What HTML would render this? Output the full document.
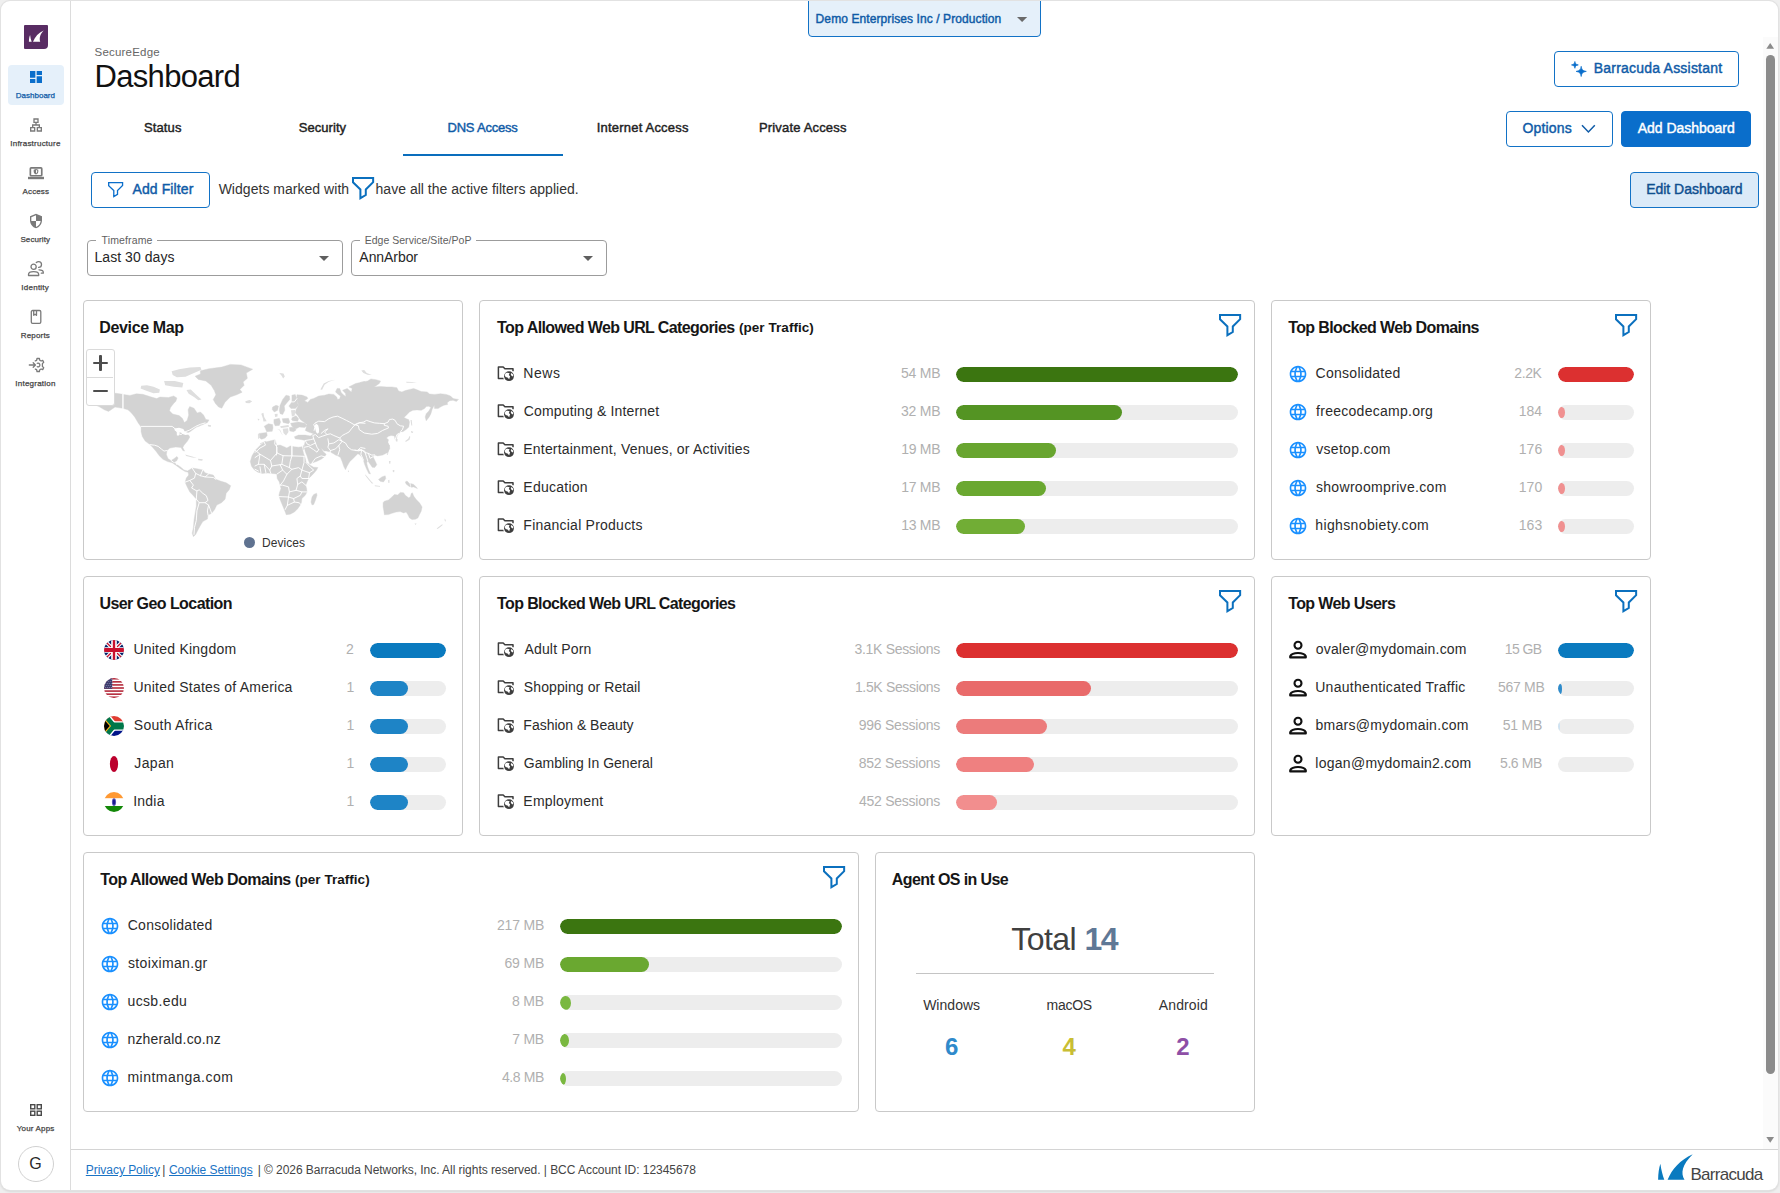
<!DOCTYPE html>
<html lang="en">
<head>
<meta charset="utf-8">
<title>SecureEdge - Dashboard</title>
<style>
html,body{margin:0;padding:0;}
body{width:1780px;height:1193px;overflow:hidden;background:#efefef;font-family:"Liberation Sans",sans-serif;}
#win{position:absolute;left:1px;top:1px;width:1777px;height:1189px;background:#fff;border-radius:9px;overflow:hidden;box-shadow:0 0 0 1px #e2e2e2,0 1px 3px rgba(0,0,0,.18);}
#pg{position:absolute;left:-1px;top:-1px;width:1780px;height:1193px;}
.a{position:absolute;box-sizing:border-box;}
.t{position:absolute;white-space:pre;line-height:1;font-family:"Liberation Sans",sans-serif;}
.card{position:absolute;box-sizing:border-box;border:1px solid #c9c9c9;border-radius:4px;background:#fff;}
.bar{position:absolute;height:15px;border-radius:8px;background:#ededed;overflow:hidden;}
.bar i{position:absolute;left:0;top:0;height:15px;border-radius:8px;display:block;}
.btn{position:absolute;box-sizing:border-box;border:1px solid #1272c6;border-radius:4px;background:#fff;}
svg{position:absolute;overflow:visible;}
</style>
</head>
<body>
<div id="win"><div id="pg">

<!-- shapes -->
<!-- sidebar -->
<div class="a" style="left:70px;top:0;width:1px;height:1193px;background:#dcdcdc"></div>
<div class="a" style="left:24px;top:25px;width:24px;height:24px;background:#582c63;border-radius:1px 1px 4px 1px"></div>
<div class="a" style="left:8px;top:65px;width:56px;height:40px;background:#e5f0fa;border-radius:4px"></div>
<div class="a" style="left:18px;top:1146px;width:36px;height:36px;border:1px solid #d0d0d0;border-radius:50%"></div>
<!-- account dropdown -->
<div class="a" style="left:808px;top:-4px;width:233px;height:41px;background:#e5f0fa;border:1px solid #1272c6;border-radius:4px"></div>
<!-- buttons -->
<div class="btn" style="left:1554px;top:51px;width:185px;height:36px"></div>
<div class="btn" style="left:1506px;top:111px;width:107px;height:36px"></div>
<div class="btn" style="left:1621px;top:111px;width:130px;height:36px;background:#0a6ecb;border-color:#0a6ecb"></div>
<div class="btn" style="left:1630px;top:172px;width:129px;height:36px;background:#dbeaf8"></div>
<div class="btn" style="left:91px;top:172px;width:119px;height:36px"></div>
<!-- tab underline -->
<div class="a" style="left:403px;top:154px;width:160px;height:2px;background:#0a6ebd"></div>
<!-- selects -->
<div class="a" style="left:87px;top:240px;width:256px;height:36px;border:1px solid #9c9c9c;border-radius:4px"></div>
<div class="a" style="left:96px;top:239px;width:61px;height:3px;background:#fff"></div>
<div class="a" style="left:351px;top:240px;width:256px;height:36px;border:1px solid #9c9c9c;border-radius:4px"></div>
<div class="a" style="left:360px;top:239px;width:116px;height:3px;background:#fff"></div>
<!-- footer -->
<div class="a" style="left:71px;top:1149px;width:1707px;height:1px;background:#d4d4d4"></div>
<!-- scrollbar -->
<div class="a" style="left:1763px;top:37px;width:15px;height:1112px;background:#fbfbfb"></div>
<div class="a" style="left:1766px;top:55px;width:9px;height:1019px;background:#8b8b8b;border-radius:5px"></div>
<!-- cards -->
<div class="card" style="left:83px;top:300px;width:380px;height:260px"></div>
<div class="card" style="left:479px;top:300px;width:776px;height:260px"></div>
<div class="card" style="left:1271px;top:300px;width:380px;height:260px"></div>
<div class="card" style="left:83px;top:576px;width:380px;height:260px"></div>
<div class="card" style="left:479px;top:576px;width:776px;height:260px"></div>
<div class="card" style="left:1271px;top:576px;width:380px;height:260px"></div>
<div class="card" style="left:83px;top:852px;width:776px;height:260px"></div>
<div class="card" style="left:875px;top:852px;width:380px;height:260px"></div>
<!-- agent OS divider -->
<div class="a" style="left:916px;top:973px;width:298px;height:1px;background:#c4c4c4"></div>
<!-- bars -->
<div class="bar" style="left:956px;top:367px;width:282px"><i style="width:282px;background:#3b7510"></i></div>
<div class="bar" style="left:956px;top:405px;width:282px"><i style="width:166px;background:#549423"></i></div>
<div class="bar" style="left:956px;top:443px;width:282px"><i style="width:99.5px;background:#68a52f"></i></div>
<div class="bar" style="left:956px;top:481px;width:282px"><i style="width:89.5px;background:#6aa830"></i></div>
<div class="bar" style="left:956px;top:519px;width:282px"><i style="width:68.5px;background:#71ad35"></i></div>
<div class="bar" style="left:1558px;top:367px;width:76px"><i style="width:76px;background:#dc3030"></i></div>
<div class="bar" style="left:1558px;top:405px;width:76px"><i style="width:6.5px;height:11px;top:2.0px;border-radius:50%;background:#f09090"></i></div>
<div class="bar" style="left:1558px;top:443px;width:76px"><i style="width:6.5px;height:11px;top:2.0px;border-radius:50%;background:#f09090"></i></div>
<div class="bar" style="left:1558px;top:481px;width:76px"><i style="width:6.5px;height:11px;top:2.0px;border-radius:50%;background:#f09090"></i></div>
<div class="bar" style="left:1558px;top:519px;width:76px"><i style="width:6.5px;height:11px;top:2.0px;border-radius:50%;background:#f09090"></i></div>
<div class="bar" style="left:370px;top:643px;width:76px"><i style="width:76px;background:#0a7abf"></i></div>
<div class="bar" style="left:370px;top:681px;width:76px"><i style="width:38px;background:#1e84c6"></i></div>
<div class="bar" style="left:370px;top:719px;width:76px"><i style="width:38px;background:#1e84c6"></i></div>
<div class="bar" style="left:370px;top:757px;width:76px"><i style="width:38px;background:#1e84c6"></i></div>
<div class="bar" style="left:370px;top:795px;width:76px"><i style="width:38px;background:#1e84c6"></i></div>
<div class="bar" style="left:956px;top:643px;width:282px"><i style="width:282px;background:#dc3030"></i></div>
<div class="bar" style="left:956px;top:681px;width:282px"><i style="width:135px;background:#e96a6a"></i></div>
<div class="bar" style="left:956px;top:719px;width:282px"><i style="width:91px;background:#ec7b7b"></i></div>
<div class="bar" style="left:956px;top:757px;width:282px"><i style="width:77.7px;background:#ef8080"></i></div>
<div class="bar" style="left:956px;top:795px;width:282px"><i style="width:41px;background:#f28e8e"></i></div>
<div class="bar" style="left:1558px;top:643px;width:76px"><i style="width:76px;background:#0a7abf"></i></div>
<div class="bar" style="left:1558px;top:681px;width:76px"><i style="width:3.5px;height:10px;top:2.5px;border-radius:50%;background:#2e8bcb"></i></div>
<div class="bar" style="left:1558px;top:719px;width:76px"><i style="width:2px;height:9px;top:3.0px;border-radius:50%;background:#cfe3f2"></i></div>
<div class="bar" style="left:1558px;top:757px;width:76px"></div>
<div class="bar" style="left:560px;top:919px;width:282px"><i style="width:282px;background:#3b7510"></i></div>
<div class="bar" style="left:560px;top:957px;width:282px"><i style="width:89px;background:#6aa830"></i></div>
<div class="bar" style="left:560px;top:995px;width:282px"><i style="width:10.5px;height:14px;top:0.5px;border-radius:50%;background:#7ab840"></i></div>
<div class="bar" style="left:560px;top:1033px;width:282px"><i style="width:9px;height:13.5px;top:0.75px;border-radius:50%;background:#7ab840"></i></div>
<div class="bar" style="left:560px;top:1071px;width:282px"><i style="width:6px;height:12px;top:1.5px;border-radius:50%;background:#7ab840"></i></div>

<!-- map -->
<svg style="left:0;top:0" width="1780" height="1193" viewBox="0 0 1780 1193">
<defs><clipPath id="mapclip"><rect x="84" y="345" width="378" height="205"/></clipPath></defs>
<g clip-path="url(#mapclip)">
<path fill="#d3d3d3" stroke="#d3d3d3" stroke-width="0.4" stroke-linejoin="round" d="M200.4 370.8 L209.0 368.7 L221.8 367.1 L230.3 364.4 L241.0 364.9 L252.7 369.2 L246.3 373.0 L247.4 378.3 L243.1 382.0 L244.2 385.2 L239.9 389.5 L242.1 392.2 L236.7 394.8 L230.3 397.0 L225.0 402.3 L221.8 408.2 L218.6 407.1 L215.4 403.4 L213.2 399.6 L215.9 394.8 L214.3 390.6 L211.1 385.2 L205.8 381.0 L198.3 379.4 L195.1 376.2 L200.4 374.0Z M123.0 394.3 L114.0 393.0 L100.0 394.0 L92.0 398.0 L90.0 403.0 L99.0 406.6 L104.3 409.8 L108.6 411.4 L115.0 407.1 L122.6 408.3 L122.6 394.3Z M123.7 394.6 L130.0 395.4 L136.4 393.8 L142.8 394.3 L151.3 397.0 L156.7 398.6 L159.9 397.0 L168.4 397.5 L173.7 395.9 L176.9 398.0 L175.9 401.2 L173.7 403.4 L170.5 407.6 L169.5 410.8 L172.7 414.0 L179.1 415.6 L182.3 418.3 L184.4 422.6 L187.1 420.5 L188.7 415.1 L188.1 409.8 L189.7 406.6 L194.0 408.2 L197.2 413.0 L200.4 411.9 L203.6 415.1 L205.8 419.4 L209.0 419.9 L207.4 422.6 L202.6 424.7 L198.3 426.3 L200.4 425.3 L195.7 427.6 L191.0 431.1 L187.5 433.5 L189.8 437.0 L187.5 441.1 L184.0 445.2 L182.8 447.6 L184.6 451.1 L182.8 450.5 L181.0 447.6 L175.8 447.0 L169.9 448.1 L167.0 450.5 L166.4 454.6 L168.1 458.7 L171.1 460.5 L174.0 458.7 L176.9 456.4 L178.1 458.1 L176.3 461.6 L173.4 462.2 L176.9 464.6 L180.5 466.9 L184.0 469.9 L187.5 471.0 L189.3 469.9 L188.7 472.2 L185.1 471.6 L180.5 468.7 L175.8 465.2 L172.2 462.8 L167.5 461.6 L162.9 459.3 L159.3 455.8 L155.8 451.1 L152.3 447.0 L149.9 444.6 L145.2 441.1 L142.3 436.4 L141.1 431.7 L141.1 427.0 L138.2 422.9 L134.7 417.0 L130.0 411.2 L133.2 414.0 L127.8 409.8 L123.7 408.5Z M189.3 469.9 L192.2 468.1 L196.9 468.7 L202.8 469.9 L205.1 472.8 L208.6 474.0 L213.3 475.1 L215.7 479.2 L220.4 481.0 L226.2 482.8 L230.7 485.7 L229.2 489.8 L226.2 493.3 L225.1 499.2 L221.5 502.7 L216.8 505.1 L214.5 509.8 L211.6 513.3 L208.0 515.0 L207.4 519.1 L202.8 521.5 L200.4 525.6 L198.1 529.7 L195.7 534.4 L193.4 536.7 L192.2 533.2 L193.4 527.4 L194.0 520.3 L195.1 513.3 L196.3 506.2 L196.3 499.2 L193.4 495.7 L189.8 492.1 L186.9 486.3 L185.1 482.2 L186.3 478.1 L188.7 475.1 L188.1 472.2Z M266.1 441.1 L260.3 445.2 L255.6 449.9 L252.0 455.8 L250.3 461.6 L251.5 466.3 L254.4 469.9 L257.9 472.2 L262.6 473.4 L267.3 472.8 L265.9 472.7 L271.8 473.5 L276.8 473.9 L277.2 478.5 L279.3 481.9 L280.1 485.2 L281.0 488.6 L279.7 491.9 L278.9 495.3 L280.1 499.5 L281.8 503.7 L283.9 508.7 L285.6 512.9 L286.2 514.7 L290.2 514.2 L294.4 512.1 L297.7 508.7 L300.7 504.5 L301.5 502.0 L301.9 498.6 L305.3 495.3 L307.0 491.9 L306.6 488.6 L305.7 485.2 L307.0 481.9 L308.6 478.5 L310.3 476.9 L313.7 473.5 L316.6 470.1 L317.9 467.5 L313.7 467.2 L309.5 464.7 L306.1 462.6 L305.3 458.4 L303.6 453.4 L301.9 446.7 L301.9 446.8 L298.6 447.2 L294.4 446.8 L290.2 445.9 L286.9 448.0 L283.5 446.4 L280.1 445.1 L276.8 445.5 L276.0 443.0 L275.1 439.7 L271.8 440.5 L264.2 442.2 L260.0 443.9Z M316.6 493.2 L317.0 495.3 L315.4 500.3 L313.7 504.5 L312.0 504.9 L311.0 502.0 L312.0 497.0 L313.7 494.5Z M296.9 394.8 L301.9 395.1 L307.0 396.9 L307.8 398.6 L304.5 400.7 L307.8 402.4 L310.3 399.4 L313.7 398.4 L318.7 396.1 L324.6 395.2 L328.8 394.0 L333.8 394.4 L336.7 396.9 L337.6 399.4 L339.7 398.8 L340.5 396.1 L338.0 394.2 L335.5 391.9 L337.1 388.4 L339.7 388.5 L341.3 392.7 L343.9 395.2 L345.9 396.5 L345.5 393.6 L342.6 390.2 L347.2 388.5 L351.4 391.9 L352.2 388.5 L348.9 386.9 L355.6 383.5 L365.0 381.4 L360.0 382.7 L367.6 381.0 L370.9 378.9 L376.0 379.7 L380.6 381.0 L379.3 383.5 L374.3 386.9 L380.1 386.4 L386.9 386.9 L391.9 386.9 L396.9 387.7 L398.6 391.0 L401.9 391.9 L405.3 390.6 L409.5 389.4 L413.7 388.5 L417.0 389.8 L421.2 391.5 L427.1 391.9 L429.6 394.0 L434.6 394.4 L440.5 393.7 L446.4 394.4 L450.6 396.1 L453.1 398.6 L458.5 399.4 L456.4 401.5 L453.1 400.3 L449.7 400.7 L447.2 402.8 L447.6 404.5 L443.9 405.3 L441.3 406.6 L438.0 408.6 L434.6 408.6 L434.2 405.3 L432.1 409.5 L430.9 413.7 L429.2 417.0 L426.2 420.8 L425.2 417.0 L426.2 413.7 L428.8 411.0 L430.9 407.4 L428.8 406.3 L426.2 406.6 L424.6 408.6 L421.2 410.3 L417.0 409.9 L412.8 410.3 L409.5 412.0 L406.1 415.4 L404.0 417.4 L407.0 419.1 L408.6 419.5 L409.5 422.1 L408.8 427.1 L406.1 429.6 L402.8 431.7 L400.7 431.4 L399.0 433.4 L397.3 435.1 L396.5 438.8 L395.1 439.7 L394.4 435.9 L391.0 435.5 L388.5 436.3 L386.4 438.0 L388.5 439.7 L387.9 442.2 L389.4 445.5 L388.7 449.7 L387.3 455.0 L389.4 445.0 L389.8 448.4 L387.7 452.5 L382.7 455.1 L377.6 455.9 L374.7 454.9 L373.0 456.7 L375.5 461.8 L376.8 464.7 L374.7 467.5 L372.2 467.2 L370.5 464.7 L367.6 460.5 L366.7 463.0 L367.6 466.8 L368.8 470.1 L370.5 473.9 L368.8 473.5 L366.7 469.3 L364.6 464.3 L363.4 460.1 L362.1 457.6 L360.0 455.1 L357.5 453.4 L355.0 451.7 L361.5 450.0 L358.1 453.4 L355.6 455.9 L353.1 458.4 L349.7 461.8 L347.2 466.0 L345.5 469.7 L343.9 466.8 L342.2 461.8 L340.5 457.6 L338.0 455.9 L335.5 455.1 L333.0 453.4 L330.4 452.1 L326.2 451.0 L324.2 451.0 L321.6 448.5 L319.4 446.0 L318.0 444.3 L319.5 444.8 L321.4 448.5 L323.3 451.7 L326.2 454.2 L324.6 456.7 L321.2 459.2 L317.0 461.3 L312.0 463.0 L309.9 463.9 L308.6 460.9 L307.0 455.9 L305.3 451.7 L304.5 448.4 L303.4 445.4 L303.4 449.7 L303.8 447.2 L304.6 443.9 L305.3 440.5 L301.9 439.7 L298.6 439.2 L295.2 438.8 L294.4 436.7 L298.6 435.1 L305.3 435.1 L310.3 435.9 L313.7 433.8 L308.6 432.1 L305.3 430.4 L306.1 427.9 L307.0 424.6 L303.6 422.1 L300.3 419.5 L297.7 415.4 L295.2 412.8 L296.1 409.5 L298.6 405.3 L297.7 401.9 L296.9 398.6Z M280.1 405.3 L282.7 399.4 L286.0 395.2 L289.4 396.1 L289.8 399.4 L286.9 402.8 L284.3 406.1 L284.8 410.3 L282.7 414.5 L280.1 413.7 L279.3 410.3Z M272.6 407.0 L276.0 405.3 L278.5 406.1 L277.6 410.3 L274.3 412.0 L272.2 409.5Z M291.9 395.2 L295.2 394.4 L296.9 398.6 L297.7 403.6 L298.6 405.3 L295.2 408.6 L291.0 408.6 L288.9 406.1 L291.9 401.9Z M259.2 433.4 L266.7 432.5 L267.2 435.5 L265.1 438.0 L261.7 439.2 L259.6 438.0Z M264.2 426.2 L268.4 423.7 L272.6 424.6 L273.0 427.9 L272.2 431.3 L266.7 431.7 L265.5 428.8Z M273.9 419.5 L279.3 418.3 L280.6 422.1 L279.3 425.4 L275.1 425.8 L273.9 422.9Z M282.2 418.7 L288.5 418.3 L289.8 422.1 L288.5 423.7 L283.1 422.5Z M292.3 417.4 L296.1 415.8 L298.6 418.7 L297.7 421.2 L292.7 420.8 L291.5 419.5Z M290.6 423.3 L298.6 422.1 L304.9 423.3 L307.0 425.8 L304.5 427.5 L299.4 427.1 L296.1 428.8 L291.9 426.2Z M289.4 427.5 L294.4 427.1 L296.1 430.0 L293.6 431.7 L289.8 430.9Z M378.5 479.4 L381.8 476.9 L385.2 475.8 L385.8 478.5 L383.5 482.0 L380.1 481.2Z M405.3 481.9 L407.0 481.0 L409.5 483.6 L410.3 486.9 L408.6 486.1 L406.1 484.0Z M410.7 483.6 L413.7 484.4 L416.2 486.9 L417.4 488.6 L413.7 486.9 L411.2 487.3Z M383.1 502.8 L384.3 501.2 L388.5 499.9 L391.9 497.0 L394.4 494.5 L397.7 494.9 L400.3 492.4 L403.6 492.8 L405.3 495.3 L408.6 497.8 L410.3 497.0 L411.2 493.6 L412.4 492.8 L413.7 496.1 L416.2 499.5 L419.5 502.8 L422.1 507.0 L421.2 511.2 L419.5 514.6 L417.9 517.9 L415.4 519.2 L412.0 519.6 L409.5 517.9 L407.8 514.6 L406.1 512.1 L403.6 512.9 L400.3 511.6 L396.1 512.1 L391.9 513.3 L388.5 514.6 L384.3 514.7 L383.9 511.2 L383.1 507.0Z"/>
<path fill="#dedede" d="M186.5 390.0 L190.8 389.5 L196.2 394.8 L201.5 399.6 L198.3 400.2 L194.0 397.0 L188.7 393.8Z M141.2 385.8 L147.0 385.2 L153.5 386.8 L159.9 389.5 L159.3 392.7 L153.5 393.2 L147.0 391.1 L140.6 388.4Z M171.6 371.3 L179.1 369.2 L189.7 367.6 L200.4 367.1 L201.5 369.7 L194.0 373.0 L185.5 376.7 L176.9 377.2 L172.7 375.1Z M164.1 381.0 L174.8 381.0 L183.3 383.1 L182.3 387.4 L173.7 386.8 L165.2 385.2Z M207.9 424.7 L211.1 425.3 L210.6 426.9 L207.9 426.3Z M245.3 401.2 L249.5 400.0 L252.2 401.2 L249.5 403.2 L245.8 403.1Z M185.1 454.6 L192.2 456.4 L196.9 458.1 L192.2 457.5 L186.3 456.0Z M198.1 458.7 L202.8 459.3 L202.2 460.7 L198.3 460.2Z M261.3 413.7 L263.4 412.8 L264.2 417.0 L266.7 421.2 L263.4 421.6 L263.0 418.7Z M257.5 418.7 L259.6 419.1 L258.4 420.8Z M276.8 428.8 L279.3 430.0 L281.8 434.2 L283.1 435.6 L281.7 433.4 L280.0 429.8Z M282.7 428.8 L288.1 428.3 L288.5 432.1 L286.0 435.5 L283.5 433.0Z M280.1 426.2 L288.5 425.0 L288.9 427.1 L281.0 427.9Z M291.0 410.3 L295.2 409.9 L294.8 415.4 L291.9 416.6Z M274.7 414.1 L277.6 413.7 L277.5 416.6 L275.1 416.9Z M257.9 433.8 L258.9 433.8 L258.9 438.8 L258.0 438.7Z M279.3 373.0 L283.5 373.4 L284.8 376.4 L283.1 378.5 L281.8 376.0Z M320.4 389.4 L323.7 383.5 L328.8 381.0 L335.5 379.7 L328.8 381.8 L324.6 384.8 L322.1 389.8Z M361.3 370.5 L364.2 370.1 L366.7 373.0 L371.8 375.1 L367.6 374.7 L363.4 373.0Z M406.1 381.8 L412.0 382.0 L417.0 382.7 L412.0 382.8 L406.6 382.7Z M410.5 420.0 L411.7 420.0 L412.3 425.4 L411.3 425.6Z M411.0 430.9 L413.3 431.7 L412.8 433.0 L411.0 432.5Z M409.5 435.9 L410.3 436.7 L409.5 439.7 L406.1 441.8 L404.9 441.2 L408.2 438.8Z M395.8 438.8 L397.7 439.2 L397.3 441.8 L395.8 441.3Z M365.1 474.3 L367.6 476.9 L370.9 481.0 L373.4 483.6 L371.8 483.4 L368.4 479.5 L365.5 475.7Z M374.7 485.2 L380.1 485.9 L380.0 486.7 L374.9 486.2Z M388.1 480.2 L389.4 479.8 L389.5 482.7 L388.4 483.1Z M388.9 460.9 L390.6 460.9 L390.2 463.9 L389.2 463.6Z M392.7 470.1 L394.4 470.1 L394.2 472.2 L392.9 472.0Z M414.5 523.4 L416.6 523.5 L415.5 525.1Z M436.7 528.4 L438.8 526.7 L442.2 524.2 L442.7 525.1 L439.7 527.6 L437.6 529.1Z M444.5 518.6 L445.9 520.0 L445.5 521.8 L444.8 520.9Z M347.9 470.6 L349.0 470.8 L348.7 472.2 L347.9 471.8Z"/>
<path fill="#fff" d="M314.7 425.0 L316.6 423.7 L318.3 425.6 L319.1 429.2 L318.9 432.5 L317.4 433.8 L316.0 431.9 L315.2 428.8Z M174.3 428.5 L179.1 427.7 L183.3 429.0 L184.9 431.7 L188.1 432.7 L190.8 432.4 L190.3 434.3 L185.5 434.9 L183.3 434.3 L181.2 432.7 L179.6 432.2 L179.1 435.4 L176.9 435.4 L176.7 431.7 L174.8 430.6Z"/>
<path fill="none" stroke="#fff" stroke-width="0.95" stroke-linejoin="round" stroke-linecap="round" d="M141.1 426.4 L172.2 426.4 L175.8 429.4 L178.1 433.5 L181.0 434.6 L184.0 432.3 L189.8 430.0 L195.7 426.4 L200.4 424.3 L205.1 422.9 M149.9 444.6 L154.6 445.2 L158.2 446.4 L161.7 449.3 L164.0 451.1 L167.0 450.5 M122.8 394.0 L122.8 408.5 M171.1 460.5 L173.4 462.2 M176.9 464.6 L176.3 461.6 M192.2 468.1 L195.7 473.4 L194.5 478.1 L189.8 480.4 L185.1 482.2 M195.7 473.4 L200.4 475.7 L202.8 469.9 M200.4 475.7 L205.1 476.9 L208.6 474.0 M205.1 476.9 L213.3 477.5 L215.7 479.2 M189.8 480.4 L193.4 485.1 L191.6 488.0 L196.9 491.0 L199.2 489.8 L202.8 493.3 L206.3 495.7 L208.0 500.4 L205.1 502.7 L208.6 505.1 L210.4 509.8 L211.6 513.3 M196.9 491.0 L196.3 499.2 M196.3 499.2 L199.2 502.7 L205.1 502.7 M199.2 502.7 L196.9 510.9 L196.3 520.3 L194.5 527.4 L194.0 534.4 M208.6 505.1 L207.4 510.9 L208.0 515.0 M291.9 445.0 L291.9 455.9 L304.0 456.3 M276.4 445.0 L277.0 453.0 L283.1 455.7 L291.9 455.9 M277.0 453.0 L270.5 460.5 L260.0 454.2 L255.0 457.6 M270.5 460.5 L271.8 466.0 L269.7 470.1 L270.9 473.5 M283.1 455.7 L281.8 464.3 L289.4 467.6 L290.2 461.8 L291.9 455.9 M271.8 466.0 L280.1 464.7 L281.8 464.3 M280.1 464.7 L282.7 470.1 L277.2 473.9 M289.4 467.6 L291.9 469.3 L298.6 467.6 L301.9 470.1 L304.0 462.6 L304.0 456.3 M282.7 470.1 L286.9 474.3 L291.9 469.3 M301.9 470.1 L309.5 472.7 L313.7 470.1 L310.3 467.2 L306.1 462.6 M309.5 472.7 L308.6 478.5 M301.9 470.1 L300.3 476.0 L301.9 478.5 L308.6 478.5 M286.9 474.3 L283.5 481.0 L280.1 485.2 M300.3 476.0 L296.9 478.5 L297.7 484.4 L296.1 490.3 L289.4 491.9 L288.5 486.9 L282.7 485.2 L280.1 485.2 M297.7 484.4 L301.9 481.9 L305.7 485.2 M296.1 490.3 L301.9 491.9 L307.0 491.9 M289.4 491.9 L288.5 497.0 L279.3 496.6 M288.5 497.0 L293.6 498.6 L300.3 495.3 L301.9 491.9 M288.5 497.0 L287.3 505.4 L285.2 509.5 M287.3 505.4 L294.4 502.0 L299.4 502.8 L300.7 504.5 M293.6 498.6 L294.4 502.0 M255.0 450.0 L260.0 454.2 L258.4 464.3 L255.0 466.0 M258.4 464.3 L264.2 464.3 L265.9 472.7 M264.2 464.3 L269.7 470.1 M260.0 466.8 L260.9 472.7 M255.0 469.3 L258.4 471.0 M275.1 439.7 L274.7 443.9 L277.0 447.2 L276.4 455.0 M264.2 442.2 L265.5 445.1 L260.0 448.0 L256.7 451.4 L255.0 452.2 M291.9 446.4 L291.9 455.0 M315.4 422.9 L318.7 421.2 L324.6 421.6 L328.8 418.7 L333.0 417.0 L337.6 416.2 L342.2 418.3 L346.4 420.4 L349.7 422.1 L354.7 425.0 L359.8 422.9 L365.0 423.3 M355.0 424.6 L358.4 422.9 L363.4 422.1 L366.7 420.4 L370.1 421.6 L374.3 422.9 L379.3 423.3 L384.3 423.7 L388.1 422.1 L389.4 419.5 L392.7 419.1 L395.2 420.4 L396.9 423.7 L400.3 425.8 L403.6 426.2 L402.4 429.6 L400.7 431.3 M355.0 424.6 L358.4 425.8 L359.2 429.6 L364.2 433.0 L371.8 434.2 L377.6 433.4 L382.7 430.4 L388.5 427.9 L388.1 426.2 L384.3 425.4 L384.3 423.7 M354.7 425.0 L351.4 428.8 L348.9 432.1 L345.5 433.8 L342.2 435.5 L339.7 438.0 L342.2 441.3 L345.5 443.0 L348.0 447.2 L351.4 449.7 L356.4 450.6 L360.6 449.7 L365.0 451.4 M315.4 422.9 L313.7 424.6 L314.9 427.1 L314.1 430.4 M321.2 433.4 L324.6 430.4 L327.9 428.8 L324.6 432.1 L327.1 434.6 L330.4 433.8 L333.8 435.5 L339.7 438.0 M313.7 438.8 L312.8 435.5 L315.4 434.6 L318.7 437.6 L322.1 436.3 L327.1 434.6 M313.7 438.8 L315.4 443.0 L317.0 447.2 L318.7 449.7 M327.9 438.8 L328.8 443.9 L327.9 447.2 L330.4 450.6 L329.6 455.0 M328.8 443.9 L333.8 443.0 L338.8 439.7 L342.2 441.3 M330.4 450.6 L335.5 448.9 L338.8 445.5 L342.2 441.3 M338.8 445.5 L339.7 449.7 L338.0 455.0 M305.3 440.5 L310.3 439.7 L313.7 438.8 M305.3 440.5 L307.0 443.9 L310.3 445.5 L315.4 443.0 M304.5 447.2 L308.6 446.4 L313.7 449.7 L317.0 452.2 L318.7 449.7 M312.0 463.0 L315.4 458.4 L321.2 455.9 L324.6 456.7 M355.0 450.0 L358.4 450.9 L361.7 450.0 L365.1 452.5 L368.4 453.4 L371.8 455.1 L374.7 454.9 M361.7 450.0 L360.9 454.2 L363.4 460.1 M365.1 452.5 L366.7 457.6 L367.6 460.5 M368.4 453.4 L370.1 458.4 L373.0 456.7 M365.0 448.4 L360.6 447.5 L358.1 450.0 L361.5 450.0 M399.0 433.4 L396.9 434.6 L395.1 439.7 M296.9 398.6 L294.4 401.9 L291.9 401.9"/>
</g></svg>

<!-- icons -->
<!-- logo fins -->
<svg style="left:24px;top:25px" width="24" height="24" viewBox="0 0 24 24"><path d="M4.9 16.7 C4.9 13.8 5.4 11.6 6.1 10 C6.3 12.4 6.9 14.6 7.7 16.7 Z M9 16.7 C11 11.6 14.6 7.6 19.7 5.4 C16.6 8.4 14.9 12.4 16.2 16.7 Z" fill="#fff"/></svg>
<!-- sidebar: dashboard -->
<svg style="left:28px;top:69px" width="16" height="16" viewBox="0 0 24 24"><path fill="#0a6ecb" d="M3 13h8V3H3v10zm0 8h8v-6H3v6zm10 0h8V11h-8v10zm0-18v6h8V3h-8z"/></svg>
<!-- infrastructure (lan) -->
<svg style="left:28px;top:117px" width="16" height="16" viewBox="0 0 24 24"><path fill="#7a7a7a" d="M13 22h8v-7h-3v-4h-5V9h3V2H8v7h3v2H6v4H3v7h8v-7H8v-2h8v2h-3v7zM10 7V4h4v3h-4zM9 17v3H5v-3h4zm10 0v3h-4v-3h4z"/></svg>
<!-- access: laptop + shield -->
<svg style="left:27px;top:165px" width="18" height="16" viewBox="0 0 18 16"><rect x="3.350" y="2.850" width="11.400" height="7.900" rx="0.800" fill="none" stroke="#7a7a7a" stroke-width="1.700"/><rect x="1" y="11.800" width="16" height="2.400" fill="#7a7a7a"/><path d="M9 3.900 L11.300 4.800 V6.600 C11.300 8.100 10.300 9.100 9 9.600 C7.700 9.100 6.700 8.100 6.700 6.600 V4.800 Z" fill="#7a7a7a"/><path d="M9 5.100 V8.400 C9.700 8 10.200 7.400 10.200 6.600 V5.600Z" fill="#fff"/><path d="M9 5.100 V6.700 H7.800 V5.600Z" fill="#fff" opacity="0.0"/></svg>
<!-- security -->
<svg style="left:28px;top:213px" width="16" height="16" viewBox="0 0 24 24"><path fill="#7a7a7a" d="M12 1L3 5v6c0 5.550 3.840 10.740 9 12 5.160-1.260 9-6.450 9-12V5l-9-4zm0 10.990h7c-.530 4.120-3.280 7.790-7 8.940V12H5V6.300l7-3.110v8.800z"/></svg>
<!-- identity -->
<svg style="left:27px;top:260px" width="18" height="18" viewBox="0 0 18 18"><g fill="none" stroke="#7a7a7a" stroke-width="1.3" stroke-linecap="round" stroke-linejoin="round"><circle cx="6.600" cy="6.700" r="2.600"/><path d="M1.500 15.500 V14.500 C1.500 12.600 3.400 11.700 6.600 11.700 C9.800 11.700 11.700 12.600 11.700 14.500 V15.500 Z"/><path d="M9.300 2.500 C10 1.900 10.800 1.600 11.600 1.600 C13.300 1.600 14.500 2.900 14.500 4.500 C14.500 6.100 13.300 7.400 11.600 7.400"/><path d="M12 9.800 C14.600 9.800 16.300 10.700 16.300 12.400 V13.200 H14.300"/></g></svg>
<!-- reports -->
<svg style="left:28px;top:309px" width="16" height="16" viewBox="0 0 16 16"><g fill="none" stroke="#7a7a7a" stroke-width="1.300" stroke-linejoin="round"><rect x="3.300" y="1.500" width="9.500" height="12.800" rx="1.300"/><path d="M5.700 1.700 V6.300 L7.100 5.200 L8.500 6.300 V1.700"/></g></svg>
<!-- integration -->
<svg style="left:28px;top:357px" width="16" height="16" viewBox="0 0 16 16"><g fill="none" stroke="#7a7a7a" stroke-width="1.300" stroke-linecap="round" stroke-linejoin="round"><path d="M1.300 8 H7.200 M5.200 5.800 L7.400 8 L5.200 10.200"/><path d="M7.300 3.900 L8.600 3.300 L9 1.500 H11.400 L11.800 3.300 L13.100 4 L14.700 3.400 L15.700 5.300 L14.400 6.600 V9.400 L15.700 10.700 L14.700 12.600 L13.100 12 L11.800 12.700 L11.400 14.500 H9 L8.600 12.700 L7.300 12.100"/><path d="M9.300 6.300 C10.300 5.700 11.900 6.500 11.900 8 C11.900 9.500 10.300 10.300 9.300 9.700"/></g></svg>
<!-- your apps -->
<svg style="left:29px;top:1103px" width="14" height="14" viewBox="0 0 14 14"><g fill="none" stroke="#4a4a4a" stroke-width="1.400"><rect x="1.700" y="1.700" width="4.100" height="4.100"/><rect x="8.200" y="1.700" width="4.100" height="4.100"/><rect x="1.700" y="8.200" width="4.100" height="4.100"/><rect x="8.200" y="8.200" width="4.100" height="4.100"/></g></svg>
<!-- dropdown arrows -->
<svg style="left:1016.800px;top:16.900px" width="10.200" height="5.100" viewBox="0 0 10 5"><path d="M0 0H10L5 5Z" fill="#6a6a6a"/></svg>
<svg style="left:319px;top:256px" width="10" height="5" viewBox="0 0 10 5"><path d="M0 0H10L5 5Z" fill="#5f5f5f"/></svg>
<svg style="left:583px;top:256px" width="10" height="5" viewBox="0 0 10 5"><path d="M0 0H10L5 5Z" fill="#5f5f5f"/></svg>
<!-- scrollbar arrows -->
<svg style="left:1766.300px;top:43px" width="8.400" height="5.800" viewBox="0 0 8 6"><path d="M0 6H8L4 0Z" fill="#8b8b8b"/></svg>
<svg style="left:1766.300px;top:1137.200px" width="8.400" height="5.800" viewBox="0 0 8 6"><path d="M0 0H8L4 6Z" fill="#8b8b8b"/></svg>
<!-- sparkle -->
<svg style="left:1570px;top:60px" width="18" height="18" viewBox="0 0 18 18"><path fill="#0a6ecb" d="M4.900 1.500 C5.200 3.700 5.700 4.300 8.300 4.900 C5.700 5.500 5.200 6.100 4.900 8.300 C4.600 6.100 4.100 5.500 1.500 4.900 C4.100 4.300 4.600 3.700 4.900 1.500Z M11.200 6.300 C11.700 9.700 12.600 10.700 16.300 11.400 C12.600 12.100 11.700 13.100 11.200 16.500 C10.700 13.100 9.800 12.100 6.100 11.400 C9.800 10.700 10.700 9.700 11.200 6.300Z" stroke="#0a6ecb" stroke-width="0.7" stroke-linejoin="round"/></svg>
<!-- options chevron -->
<svg style="left:1580px;top:123px" width="17" height="12" viewBox="0 0 17 12"><path d="M2 2.300 L8.400 9 L14.800 2.300" fill="none" stroke="#0f5ba7" stroke-width="1.500"/></svg>
<!-- devices legend dot -->
<div class="a" style="left:244px;top:537px;width:11px;height:11px;border-radius:50%;background:#5f7290"></div>
<!-- map zoom control -->
<div class="a" style="left:85.800px;top:349.200px;width:29px;height:56.600px;background:#fff;border:1px solid #dadada;border-radius:3px"></div>
<div class="a" style="left:87px;top:377px;width:26px;height:1px;background:#dadada"></div>
<div class="a" style="left:92.700px;top:361.500px;width:15.600px;height:2.800px;background:#4d4d4d;border-radius:1px"></div>
<div class="a" style="left:99.100px;top:355.100px;width:2.800px;height:15.600px;background:#4d4d4d;border-radius:1px"></div>
<div class="a" style="left:92.700px;top:389.700px;width:15.600px;height:2.800px;background:#4d4d4d;border-radius:1px"></div>
<svg style="left:1218.9px;top:313.9px" width="22.15" height="23.00" viewBox="0 0 22.15 23"><path d="M1 1 H21.150 V5.100 L13.800 12.500 V18 L8.400 21.200 V12.500 L1 5.300 Z" fill="none" stroke="#0b70be" stroke-width="2.0" stroke-linejoin="miter"/></svg>
<svg style="left:1218.9px;top:589.9px" width="22.15" height="23.00" viewBox="0 0 22.15 23"><path d="M1 1 H21.150 V5.100 L13.800 12.500 V18 L8.400 21.200 V12.500 L1 5.300 Z" fill="none" stroke="#0b70be" stroke-width="2.0" stroke-linejoin="miter"/></svg>
<svg style="left:1614.9px;top:313.9px" width="22.15" height="23.00" viewBox="0 0 22.15 23"><path d="M1 1 H21.150 V5.100 L13.800 12.500 V18 L8.400 21.200 V12.500 L1 5.300 Z" fill="none" stroke="#0b70be" stroke-width="2.0" stroke-linejoin="miter"/></svg>
<svg style="left:1614.9px;top:589.9px" width="22.15" height="23.00" viewBox="0 0 22.15 23"><path d="M1 1 H21.150 V5.100 L13.800 12.500 V18 L8.400 21.200 V12.500 L1 5.300 Z" fill="none" stroke="#0b70be" stroke-width="2.0" stroke-linejoin="miter"/></svg>
<svg style="left:822.9px;top:865.9px" width="22.15" height="23.00" viewBox="0 0 22.15 23"><path d="M1 1 H21.150 V5.100 L13.800 12.500 V18 L8.400 21.200 V12.500 L1 5.300 Z" fill="none" stroke="#0b70be" stroke-width="2.0" stroke-linejoin="miter"/></svg>
<svg style="left:351.6px;top:177.3px" width="22.15" height="23.00" viewBox="0 0 22.15 23"><path d="M1 1 H21.150 V5.100 L13.800 12.500 V18 L8.400 21.200 V12.500 L1 5.300 Z" fill="none" stroke="#0b70be" stroke-width="2.0" stroke-linejoin="miter"/></svg>
<svg style="left:108.2px;top:182.4px" width="15.28" height="15.87" viewBox="0 0 22.15 23"><path d="M1 1 H21.150 V5.100 L13.800 12.500 V18 L8.400 21.200 V12.500 L1 5.300 Z" fill="none" stroke="#0b6ecb" stroke-width="1.9" stroke-linejoin="miter"/></svg>
<svg style="left:1287.9px;top:363.7px" width="20" height="20" viewBox="0 0 24 24"><path fill="#1a90ff" d="M11.990 2C6.470 2 2 6.480 2 12s4.470 10 9.990 10C17.520 22 22 17.520 22 12S17.520 2 11.990 2zm6.930 6h-2.950c-.320-1.250-.780-2.450-1.380-3.560 1.840.630 3.370 1.910 4.330 3.560zM12 4.040c.830 1.200 1.480 2.530 1.910 3.960h-3.820c.430-1.430 1.080-2.760 1.910-3.960zM4.260 14C4.100 13.360 4 12.690 4 12s.100-1.360.260-2h3.380c-.080.660-.140 1.320-.140 2 0 .680.060 1.340.140 2H4.260zm.820 2h2.950c.320 1.250.780 2.450 1.380 3.560-1.840-.630-3.370-1.900-4.330-3.560zm2.950-8H5.080c.960-1.660 2.490-2.930 4.330-3.560C8.810 5.550 8.350 6.750 8.030 8zM12 19.960c-.830-1.200-1.480-2.530-1.910-3.960h3.820c-.430 1.430-1.080 2.760-1.910 3.960zM14.340 14H9.660c-.090-.660-.160-1.320-.160-2 0-.680.070-1.350.160-2h4.680c.090.650.160 1.320.160 2 0 .680-.070 1.340-.160 2zm.250 5.560c.600-1.110 1.060-2.310 1.380-3.560h2.950c-.960 1.650-2.490 2.930-4.330 3.560zM16.360 14c.080-.660.140-1.320.140-2 0-.680-.060-1.340-.140-2h3.380c.160.640.260 1.310.260 2s-.100 1.360-.260 2h-3.380z"/></svg>
<svg style="left:1287.9px;top:401.7px" width="20" height="20" viewBox="0 0 24 24"><path fill="#1a90ff" d="M11.990 2C6.470 2 2 6.480 2 12s4.470 10 9.990 10C17.520 22 22 17.520 22 12S17.520 2 11.990 2zm6.930 6h-2.950c-.320-1.250-.780-2.450-1.380-3.560 1.840.630 3.370 1.910 4.330 3.560zM12 4.040c.830 1.200 1.480 2.530 1.910 3.960h-3.820c.430-1.430 1.080-2.760 1.910-3.960zM4.260 14C4.100 13.360 4 12.690 4 12s.100-1.360.260-2h3.380c-.080.660-.140 1.320-.140 2 0 .680.060 1.340.140 2H4.260zm.820 2h2.950c.320 1.250.780 2.450 1.380 3.560-1.840-.630-3.370-1.900-4.330-3.560zm2.950-8H5.080c.960-1.660 2.490-2.930 4.330-3.560C8.810 5.550 8.350 6.750 8.030 8zM12 19.960c-.830-1.200-1.480-2.530-1.910-3.960h3.820c-.430 1.430-1.080 2.760-1.910 3.960zM14.340 14H9.660c-.090-.660-.160-1.320-.160-2 0-.680.070-1.350.160-2h4.680c.090.650.160 1.320.160 2 0 .680-.070 1.340-.160 2zm.250 5.560c.600-1.110 1.060-2.310 1.380-3.560h2.950c-.960 1.650-2.490 2.930-4.330 3.560zM16.360 14c.080-.660.140-1.320.140-2 0-.680-.060-1.340-.140-2h3.380c.160.640.260 1.310.260 2s-.100 1.360-.260 2h-3.380z"/></svg>
<svg style="left:1287.9px;top:439.7px" width="20" height="20" viewBox="0 0 24 24"><path fill="#1a90ff" d="M11.990 2C6.470 2 2 6.480 2 12s4.470 10 9.990 10C17.520 22 22 17.520 22 12S17.520 2 11.990 2zm6.930 6h-2.950c-.320-1.250-.780-2.450-1.380-3.560 1.840.630 3.370 1.910 4.330 3.560zM12 4.040c.830 1.200 1.480 2.530 1.910 3.960h-3.820c.430-1.430 1.080-2.760 1.910-3.960zM4.260 14C4.100 13.360 4 12.690 4 12s.100-1.360.260-2h3.380c-.080.660-.140 1.320-.140 2 0 .680.060 1.340.140 2H4.260zm.820 2h2.950c.320 1.250.780 2.450 1.380 3.560-1.840-.630-3.370-1.900-4.330-3.560zm2.950-8H5.080c.960-1.660 2.490-2.930 4.330-3.560C8.810 5.550 8.350 6.750 8.030 8zM12 19.960c-.830-1.200-1.480-2.530-1.910-3.960h3.820c-.430 1.430-1.080 2.760-1.910 3.960zM14.340 14H9.660c-.090-.660-.160-1.320-.160-2 0-.680.070-1.350.160-2h4.680c.090.650.160 1.320.160 2 0 .680-.070 1.340-.160 2zm.250 5.560c.600-1.110 1.060-2.310 1.380-3.560h2.950c-.960 1.650-2.490 2.930-4.330 3.560zM16.360 14c.080-.660.140-1.320.140-2 0-.680-.060-1.340-.140-2h3.380c.160.640.260 1.310.260 2s-.100 1.360-.260 2h-3.380z"/></svg>
<svg style="left:1287.9px;top:477.7px" width="20" height="20" viewBox="0 0 24 24"><path fill="#1a90ff" d="M11.990 2C6.470 2 2 6.480 2 12s4.470 10 9.990 10C17.520 22 22 17.520 22 12S17.520 2 11.990 2zm6.930 6h-2.950c-.320-1.250-.780-2.450-1.380-3.560 1.840.630 3.370 1.910 4.330 3.560zM12 4.040c.830 1.200 1.480 2.530 1.910 3.960h-3.820c.430-1.430 1.080-2.760 1.910-3.960zM4.260 14C4.100 13.360 4 12.690 4 12s.100-1.360.260-2h3.380c-.080.660-.140 1.320-.140 2 0 .680.060 1.340.140 2H4.260zm.820 2h2.950c.320 1.250.780 2.450 1.380 3.560-1.840-.630-3.370-1.900-4.330-3.560zm2.950-8H5.080c.960-1.660 2.490-2.930 4.330-3.560C8.810 5.550 8.350 6.750 8.030 8zM12 19.960c-.830-1.200-1.480-2.530-1.910-3.960h3.820c-.430 1.430-1.080 2.760-1.910 3.960zM14.340 14H9.660c-.090-.660-.160-1.320-.160-2 0-.680.070-1.350.160-2h4.680c.090.650.160 1.320.160 2 0 .680-.070 1.340-.160 2zm.250 5.560c.600-1.110 1.060-2.310 1.380-3.560h2.950c-.960 1.650-2.490 2.930-4.330 3.560zM16.360 14c.080-.660.140-1.320.140-2 0-.680-.060-1.340-.140-2h3.380c.160.640.260 1.310.260 2s-.100 1.360-.260 2h-3.380z"/></svg>
<svg style="left:1287.9px;top:515.7px" width="20" height="20" viewBox="0 0 24 24"><path fill="#1a90ff" d="M11.990 2C6.470 2 2 6.480 2 12s4.470 10 9.990 10C17.520 22 22 17.520 22 12S17.520 2 11.990 2zm6.930 6h-2.950c-.320-1.250-.780-2.450-1.380-3.560 1.840.630 3.370 1.910 4.330 3.560zM12 4.040c.830 1.200 1.480 2.530 1.910 3.960h-3.820c.430-1.430 1.080-2.760 1.910-3.960zM4.260 14C4.100 13.360 4 12.690 4 12s.100-1.360.260-2h3.380c-.080.660-.140 1.320-.140 2 0 .680.060 1.340.140 2H4.260zm.820 2h2.950c.320 1.250.780 2.450 1.380 3.560-1.840-.630-3.370-1.900-4.330-3.560zm2.950-8H5.080c.960-1.660 2.490-2.930 4.330-3.560C8.810 5.550 8.350 6.750 8.030 8zM12 19.960c-.830-1.200-1.480-2.530-1.910-3.960h3.820c-.430 1.430-1.080 2.760-1.910 3.960zM14.340 14H9.660c-.090-.660-.160-1.320-.160-2 0-.680.070-1.350.160-2h4.680c.090.650.160 1.320.160 2 0 .680-.070 1.340-.160 2zm.250 5.560c.600-1.110 1.060-2.310 1.380-3.560h2.950c-.960 1.650-2.490 2.930-4.330 3.560zM16.360 14c.080-.660.140-1.320.140-2 0-.680-.060-1.340-.140-2h3.380c.160.640.260 1.310.260 2s-.100 1.360-.260 2h-3.380z"/></svg>
<svg style="left:100.0px;top:915.7px" width="20" height="20" viewBox="0 0 24 24"><path fill="#1a90ff" d="M11.990 2C6.470 2 2 6.480 2 12s4.470 10 9.990 10C17.520 22 22 17.520 22 12S17.520 2 11.990 2zm6.930 6h-2.950c-.320-1.250-.780-2.450-1.380-3.560 1.840.630 3.370 1.910 4.330 3.560zM12 4.040c.830 1.200 1.480 2.530 1.910 3.960h-3.820c.430-1.430 1.080-2.760 1.910-3.960zM4.260 14C4.100 13.360 4 12.690 4 12s.100-1.360.260-2h3.380c-.080.660-.140 1.320-.140 2 0 .680.060 1.340.140 2H4.260zm.820 2h2.950c.320 1.250.780 2.450 1.380 3.560-1.840-.630-3.370-1.900-4.330-3.560zm2.950-8H5.080c.960-1.660 2.490-2.930 4.330-3.560C8.810 5.550 8.350 6.750 8.030 8zM12 19.960c-.830-1.200-1.480-2.530-1.910-3.960h3.820c-.430 1.430-1.080 2.760-1.910 3.960zM14.340 14H9.660c-.090-.660-.160-1.320-.160-2 0-.680.070-1.350.160-2h4.680c.090.650.160 1.320.160 2 0 .680-.070 1.340-.160 2zm.250 5.560c.600-1.110 1.060-2.310 1.380-3.560h2.950c-.960 1.650-2.490 2.930-4.330 3.560zM16.360 14c.080-.660.140-1.320.140-2 0-.680-.060-1.340-.140-2h3.380c.160.640.260 1.310.260 2s-.100 1.360-.260 2h-3.380z"/></svg>
<svg style="left:100.0px;top:953.7px" width="20" height="20" viewBox="0 0 24 24"><path fill="#1a90ff" d="M11.990 2C6.470 2 2 6.480 2 12s4.470 10 9.990 10C17.520 22 22 17.520 22 12S17.520 2 11.990 2zm6.930 6h-2.950c-.320-1.250-.780-2.450-1.380-3.560 1.840.630 3.370 1.910 4.330 3.560zM12 4.040c.830 1.200 1.480 2.530 1.910 3.960h-3.820c.430-1.430 1.080-2.760 1.910-3.960zM4.260 14C4.100 13.360 4 12.690 4 12s.100-1.360.260-2h3.380c-.080.660-.140 1.320-.140 2 0 .680.060 1.340.140 2H4.260zm.820 2h2.950c.320 1.250.780 2.450 1.380 3.560-1.840-.630-3.370-1.900-4.330-3.560zm2.950-8H5.080c.960-1.660 2.490-2.930 4.330-3.560C8.810 5.550 8.350 6.750 8.030 8zM12 19.960c-.830-1.200-1.480-2.530-1.910-3.960h3.820c-.430 1.430-1.080 2.760-1.910 3.960zM14.340 14H9.660c-.090-.660-.160-1.320-.160-2 0-.680.070-1.350.160-2h4.680c.090.650.160 1.320.160 2 0 .680-.070 1.340-.160 2zm.250 5.560c.600-1.110 1.060-2.310 1.380-3.560h2.950c-.960 1.650-2.490 2.930-4.330 3.560zM16.360 14c.080-.660.140-1.320.140-2 0-.680-.060-1.340-.140-2h3.380c.160.640.260 1.310.260 2s-.100 1.360-.260 2h-3.380z"/></svg>
<svg style="left:100.0px;top:991.7px" width="20" height="20" viewBox="0 0 24 24"><path fill="#1a90ff" d="M11.990 2C6.470 2 2 6.480 2 12s4.470 10 9.990 10C17.520 22 22 17.520 22 12S17.520 2 11.990 2zm6.930 6h-2.950c-.320-1.250-.780-2.450-1.380-3.560 1.840.630 3.370 1.910 4.330 3.560zM12 4.040c.830 1.200 1.480 2.530 1.910 3.960h-3.820c.430-1.430 1.080-2.760 1.910-3.960zM4.260 14C4.100 13.360 4 12.690 4 12s.100-1.360.260-2h3.380c-.080.660-.140 1.320-.140 2 0 .680.060 1.340.140 2H4.260zm.820 2h2.950c.320 1.250.780 2.450 1.380 3.560-1.840-.630-3.370-1.900-4.330-3.560zm2.950-8H5.080c.960-1.660 2.490-2.930 4.330-3.560C8.810 5.550 8.350 6.750 8.030 8zM12 19.960c-.830-1.200-1.480-2.530-1.910-3.960h3.820c-.430 1.430-1.080 2.760-1.910 3.960zM14.340 14H9.660c-.090-.660-.160-1.320-.160-2 0-.680.070-1.350.160-2h4.680c.090.650.160 1.320.160 2 0 .680-.070 1.340-.160 2zm.250 5.560c.600-1.110 1.060-2.310 1.380-3.560h2.950c-.960 1.650-2.490 2.930-4.330 3.560zM16.360 14c.080-.660.140-1.320.140-2 0-.680-.060-1.340-.140-2h3.380c.160.640.260 1.310.260 2s-.100 1.360-.260 2h-3.380z"/></svg>
<svg style="left:100.0px;top:1029.7px" width="20" height="20" viewBox="0 0 24 24"><path fill="#1a90ff" d="M11.990 2C6.470 2 2 6.480 2 12s4.470 10 9.990 10C17.520 22 22 17.520 22 12S17.520 2 11.990 2zm6.930 6h-2.950c-.320-1.250-.780-2.450-1.380-3.560 1.840.630 3.370 1.910 4.330 3.560zM12 4.040c.830 1.200 1.480 2.530 1.910 3.960h-3.820c.430-1.430 1.080-2.760 1.910-3.960zM4.260 14C4.100 13.360 4 12.690 4 12s.100-1.360.260-2h3.380c-.080.660-.140 1.320-.140 2 0 .680.060 1.340.140 2H4.260zm.820 2h2.950c.320 1.250.780 2.450 1.380 3.560-1.840-.630-3.370-1.900-4.330-3.560zm2.950-8H5.080c.960-1.660 2.490-2.930 4.330-3.560C8.810 5.550 8.350 6.750 8.030 8zM12 19.960c-.830-1.200-1.480-2.530-1.910-3.960h3.820c-.430 1.430-1.080 2.760-1.910 3.960zM14.340 14H9.660c-.090-.660-.160-1.320-.160-2 0-.680.070-1.350.160-2h4.680c.090.650.160 1.320.160 2 0 .680-.070 1.340-.160 2zm.250 5.560c.600-1.110 1.060-2.310 1.380-3.560h2.950c-.960 1.650-2.490 2.930-4.330 3.560zM16.360 14c.080-.660.140-1.320.140-2 0-.680-.060-1.340-.140-2h3.380c.160.640.260 1.310.260 2s-.100 1.360-.260 2h-3.380z"/></svg>
<svg style="left:100.0px;top:1067.7px" width="20" height="20" viewBox="0 0 24 24"><path fill="#1a90ff" d="M11.990 2C6.470 2 2 6.480 2 12s4.470 10 9.990 10C17.520 22 22 17.520 22 12S17.520 2 11.990 2zm6.930 6h-2.950c-.320-1.250-.780-2.450-1.380-3.560 1.840.630 3.370 1.910 4.330 3.560zM12 4.040c.830 1.200 1.480 2.530 1.910 3.960h-3.820c.430-1.430 1.080-2.760 1.910-3.960zM4.260 14C4.100 13.360 4 12.690 4 12s.100-1.360.260-2h3.380c-.080.660-.140 1.320-.140 2 0 .680.060 1.340.140 2H4.260zm.820 2h2.950c.320 1.250.780 2.450 1.380 3.560-1.840-.630-3.370-1.900-4.330-3.560zm2.950-8H5.080c.960-1.660 2.490-2.930 4.330-3.560C8.810 5.550 8.350 6.750 8.030 8zM12 19.960c-.830-1.200-1.480-2.530-1.910-3.960h3.820c-.430 1.430-1.080 2.760-1.910 3.960zM14.340 14H9.660c-.090-.660-.160-1.320-.160-2 0-.680.070-1.350.160-2h4.680c.090.650.160 1.320.160 2 0 .680-.070 1.340-.160 2zm.250 5.560c.600-1.110 1.060-2.310 1.380-3.560h2.950c-.960 1.650-2.490 2.930-4.330 3.560zM16.360 14c.080-.660.140-1.320.140-2 0-.680-.060-1.340-.140-2h3.380c.160.640.260 1.310.260 2s-.100 1.360-.260 2h-3.380z"/></svg>
<svg style="left:1287.5px;top:639.7px" width="20" height="20" viewBox="0 0 20 20"><g fill="none" stroke="#111" stroke-width="2.1" stroke-linejoin="round"><circle cx="10" cy="5.300" r="3.500"/><path d="M2.200 17.400 V16.200 C3.200 14.200 6.400 13 10 13 C13.600 13 16.800 14.200 17.800 16.200 V17.400 Z"/></g></svg>
<svg style="left:1287.5px;top:677.7px" width="20" height="20" viewBox="0 0 20 20"><g fill="none" stroke="#111" stroke-width="2.1" stroke-linejoin="round"><circle cx="10" cy="5.300" r="3.500"/><path d="M2.200 17.400 V16.200 C3.200 14.200 6.400 13 10 13 C13.600 13 16.800 14.200 17.800 16.200 V17.400 Z"/></g></svg>
<svg style="left:1287.5px;top:715.7px" width="20" height="20" viewBox="0 0 20 20"><g fill="none" stroke="#111" stroke-width="2.1" stroke-linejoin="round"><circle cx="10" cy="5.300" r="3.500"/><path d="M2.200 17.400 V16.200 C3.200 14.200 6.400 13 10 13 C13.600 13 16.800 14.200 17.800 16.200 V17.400 Z"/></g></svg>
<svg style="left:1287.5px;top:753.7px" width="20" height="20" viewBox="0 0 20 20"><g fill="none" stroke="#111" stroke-width="2.1" stroke-linejoin="round"><circle cx="10" cy="5.300" r="3.500"/><path d="M2.200 17.400 V16.200 C3.200 14.200 6.400 13 10 13 C13.600 13 16.800 14.200 17.800 16.200 V17.400 Z"/></g></svg>
<svg style="left:497px;top:365.6px" width="18" height="16" viewBox="0 0 18 16"><path d="M7.300 12.400 H1.400 V1 H6.200 L7.900 2.800 H16 V5.200" fill="none" stroke="#3e3e3e" stroke-width="1.500" stroke-linejoin="round"/><circle cx="12" cy="10.200" r="5.900" fill="#fff"/><circle cx="12" cy="10.200" r="4.900" fill="#3e3e3e"/><path d="M8.600 7.200 C9.800 6.600 11.600 6.700 12.600 7.300 L11.800 9.100 L13.100 10.300 L12.200 13.300 L10.500 11.400 L8.600 10.900 L7.700 9 Z M14 6.900 L15.900 8.300 L16.300 10.400 L14.700 9.900 L13.800 8.500 Z" fill="#fff"/></svg>
<svg style="left:497px;top:403.6px" width="18" height="16" viewBox="0 0 18 16"><path d="M7.300 12.400 H1.400 V1 H6.200 L7.900 2.800 H16 V5.200" fill="none" stroke="#3e3e3e" stroke-width="1.500" stroke-linejoin="round"/><circle cx="12" cy="10.200" r="5.900" fill="#fff"/><circle cx="12" cy="10.200" r="4.900" fill="#3e3e3e"/><path d="M8.600 7.200 C9.800 6.600 11.600 6.700 12.600 7.300 L11.800 9.100 L13.100 10.300 L12.200 13.300 L10.500 11.400 L8.600 10.900 L7.700 9 Z M14 6.900 L15.900 8.300 L16.300 10.400 L14.700 9.900 L13.800 8.500 Z" fill="#fff"/></svg>
<svg style="left:497px;top:441.6px" width="18" height="16" viewBox="0 0 18 16"><path d="M7.300 12.400 H1.400 V1 H6.200 L7.900 2.800 H16 V5.200" fill="none" stroke="#3e3e3e" stroke-width="1.500" stroke-linejoin="round"/><circle cx="12" cy="10.200" r="5.900" fill="#fff"/><circle cx="12" cy="10.200" r="4.900" fill="#3e3e3e"/><path d="M8.600 7.200 C9.800 6.600 11.600 6.700 12.600 7.300 L11.800 9.100 L13.100 10.300 L12.200 13.300 L10.500 11.400 L8.600 10.900 L7.700 9 Z M14 6.900 L15.900 8.300 L16.300 10.400 L14.700 9.900 L13.800 8.500 Z" fill="#fff"/></svg>
<svg style="left:497px;top:479.6px" width="18" height="16" viewBox="0 0 18 16"><path d="M7.300 12.400 H1.400 V1 H6.200 L7.900 2.800 H16 V5.200" fill="none" stroke="#3e3e3e" stroke-width="1.500" stroke-linejoin="round"/><circle cx="12" cy="10.200" r="5.900" fill="#fff"/><circle cx="12" cy="10.200" r="4.900" fill="#3e3e3e"/><path d="M8.600 7.200 C9.800 6.600 11.600 6.700 12.600 7.300 L11.800 9.100 L13.100 10.300 L12.200 13.300 L10.500 11.400 L8.600 10.900 L7.700 9 Z M14 6.900 L15.900 8.300 L16.300 10.400 L14.700 9.900 L13.800 8.500 Z" fill="#fff"/></svg>
<svg style="left:497px;top:517.6px" width="18" height="16" viewBox="0 0 18 16"><path d="M7.300 12.400 H1.400 V1 H6.200 L7.900 2.800 H16 V5.200" fill="none" stroke="#3e3e3e" stroke-width="1.500" stroke-linejoin="round"/><circle cx="12" cy="10.200" r="5.900" fill="#fff"/><circle cx="12" cy="10.200" r="4.900" fill="#3e3e3e"/><path d="M8.600 7.200 C9.800 6.600 11.600 6.700 12.600 7.300 L11.800 9.100 L13.100 10.300 L12.200 13.300 L10.500 11.400 L8.600 10.900 L7.700 9 Z M14 6.900 L15.900 8.300 L16.300 10.400 L14.700 9.900 L13.800 8.500 Z" fill="#fff"/></svg>
<svg style="left:497px;top:641.6px" width="18" height="16" viewBox="0 0 18 16"><path d="M7.300 12.400 H1.400 V1 H6.200 L7.900 2.800 H16 V5.200" fill="none" stroke="#3e3e3e" stroke-width="1.500" stroke-linejoin="round"/><circle cx="12" cy="10.200" r="5.900" fill="#fff"/><circle cx="12" cy="10.200" r="4.900" fill="#3e3e3e"/><path d="M8.600 7.200 C9.800 6.600 11.600 6.700 12.600 7.300 L11.800 9.100 L13.100 10.300 L12.200 13.300 L10.500 11.400 L8.600 10.900 L7.700 9 Z M14 6.900 L15.900 8.300 L16.300 10.400 L14.700 9.900 L13.800 8.500 Z" fill="#fff"/></svg>
<svg style="left:497px;top:679.6px" width="18" height="16" viewBox="0 0 18 16"><path d="M7.300 12.400 H1.400 V1 H6.200 L7.900 2.800 H16 V5.200" fill="none" stroke="#3e3e3e" stroke-width="1.500" stroke-linejoin="round"/><circle cx="12" cy="10.200" r="5.900" fill="#fff"/><circle cx="12" cy="10.200" r="4.900" fill="#3e3e3e"/><path d="M8.600 7.200 C9.800 6.600 11.600 6.700 12.600 7.300 L11.800 9.100 L13.100 10.300 L12.200 13.300 L10.500 11.400 L8.600 10.900 L7.700 9 Z M14 6.900 L15.900 8.300 L16.300 10.400 L14.700 9.900 L13.800 8.500 Z" fill="#fff"/></svg>
<svg style="left:497px;top:717.6px" width="18" height="16" viewBox="0 0 18 16"><path d="M7.300 12.400 H1.400 V1 H6.200 L7.900 2.800 H16 V5.200" fill="none" stroke="#3e3e3e" stroke-width="1.500" stroke-linejoin="round"/><circle cx="12" cy="10.200" r="5.900" fill="#fff"/><circle cx="12" cy="10.200" r="4.900" fill="#3e3e3e"/><path d="M8.600 7.200 C9.800 6.600 11.600 6.700 12.600 7.300 L11.800 9.100 L13.100 10.300 L12.200 13.300 L10.500 11.400 L8.600 10.900 L7.700 9 Z M14 6.900 L15.900 8.300 L16.300 10.400 L14.700 9.900 L13.800 8.500 Z" fill="#fff"/></svg>
<svg style="left:497px;top:755.6px" width="18" height="16" viewBox="0 0 18 16"><path d="M7.300 12.400 H1.400 V1 H6.200 L7.900 2.800 H16 V5.200" fill="none" stroke="#3e3e3e" stroke-width="1.500" stroke-linejoin="round"/><circle cx="12" cy="10.200" r="5.900" fill="#fff"/><circle cx="12" cy="10.200" r="4.900" fill="#3e3e3e"/><path d="M8.600 7.200 C9.800 6.600 11.600 6.700 12.600 7.300 L11.800 9.100 L13.100 10.300 L12.200 13.300 L10.500 11.400 L8.600 10.900 L7.700 9 Z M14 6.900 L15.900 8.300 L16.300 10.400 L14.700 9.900 L13.800 8.500 Z" fill="#fff"/></svg>
<svg style="left:497px;top:793.6px" width="18" height="16" viewBox="0 0 18 16"><path d="M7.300 12.400 H1.400 V1 H6.200 L7.900 2.800 H16 V5.200" fill="none" stroke="#3e3e3e" stroke-width="1.500" stroke-linejoin="round"/><circle cx="12" cy="10.200" r="5.900" fill="#fff"/><circle cx="12" cy="10.200" r="4.900" fill="#3e3e3e"/><path d="M8.600 7.200 C9.800 6.600 11.600 6.700 12.600 7.300 L11.800 9.100 L13.100 10.300 L12.200 13.300 L10.500 11.400 L8.600 10.900 L7.700 9 Z M14 6.900 L15.900 8.300 L16.300 10.400 L14.700 9.900 L13.800 8.500 Z" fill="#fff"/></svg>
<svg style="left:104px;top:640px" width="20" height="20" viewBox="0 0 20 20"><defs><clipPath id="fuk"><circle cx="10" cy="10" r="10"/></clipPath></defs><g clip-path="url(#fuk)"><rect width="20" height="20" fill="#012169"/><path d="M0 0L20 20M20 0L0 20" stroke="#fff" stroke-width="3.6"/><path d="M0 0L20 20M20 0L0 20" stroke="#c8102e" stroke-width="1.3"/><path d="M10 0V20M0 10H20" stroke="#fff" stroke-width="5.6"/><path d="M10 0V20" stroke="#c8102e" stroke-width="2.4"/><path d="M0 10H20" stroke="#c8102e" stroke-width="3.8"/></g></svg>
<svg style="left:104px;top:678px" width="20" height="20" viewBox="0 0 20 20"><defs><clipPath id="fus"><circle cx="10" cy="10" r="10"/></clipPath></defs><g clip-path="url(#fus)"><rect width="20" height="20" fill="#fff"/><rect x="0" y="0.00" width="20" height="1.54" fill="#b22234"/><rect x="0" y="3.08" width="20" height="1.54" fill="#b22234"/><rect x="0" y="6.15" width="20" height="1.54" fill="#b22234"/><rect x="0" y="9.23" width="20" height="1.54" fill="#b22234"/><rect x="0" y="12.31" width="20" height="1.54" fill="#b22234"/><rect x="0" y="15.38" width="20" height="1.54" fill="#b22234"/><rect x="0" y="18.46" width="20" height="1.54" fill="#b22234"/><rect x="0" y="0" width="8.2" height="10.77" fill="#3c3b6e"/><circle cx="1.2" cy="1.30" r="0.42" fill="#d8d8e8"/><circle cx="3.2" cy="1.30" r="0.42" fill="#d8d8e8"/><circle cx="5.2" cy="1.30" r="0.42" fill="#d8d8e8"/><circle cx="7.2" cy="1.30" r="0.42" fill="#d8d8e8"/><circle cx="2.2" cy="3.35" r="0.42" fill="#d8d8e8"/><circle cx="4.2" cy="3.35" r="0.42" fill="#d8d8e8"/><circle cx="6.2" cy="3.35" r="0.42" fill="#d8d8e8"/><circle cx="8.2" cy="3.35" r="0.42" fill="#d8d8e8"/><circle cx="1.2" cy="5.40" r="0.42" fill="#d8d8e8"/><circle cx="3.2" cy="5.40" r="0.42" fill="#d8d8e8"/><circle cx="5.2" cy="5.40" r="0.42" fill="#d8d8e8"/><circle cx="7.2" cy="5.40" r="0.42" fill="#d8d8e8"/><circle cx="2.2" cy="7.45" r="0.42" fill="#d8d8e8"/><circle cx="4.2" cy="7.45" r="0.42" fill="#d8d8e8"/><circle cx="6.2" cy="7.45" r="0.42" fill="#d8d8e8"/><circle cx="8.2" cy="7.45" r="0.42" fill="#d8d8e8"/><circle cx="1.2" cy="9.50" r="0.42" fill="#d8d8e8"/><circle cx="3.2" cy="9.50" r="0.42" fill="#d8d8e8"/><circle cx="5.2" cy="9.50" r="0.42" fill="#d8d8e8"/><circle cx="7.2" cy="9.50" r="0.42" fill="#d8d8e8"/></g></svg>
<svg style="left:104px;top:716px" width="20" height="20" viewBox="0 0 20 20"><defs><clipPath id="fza"><circle cx="10" cy="10" r="10"/></clipPath></defs><g clip-path="url(#fza)"><rect width="20" height="20" fill="#fff"/><rect width="20" height="6" fill="#e03c31"/><rect y="14" width="20" height="6" fill="#001489"/><path d="M-3 -4 L8.500 10 L-3 24" fill="none" stroke="#fff" stroke-width="9.600"/><path d="M8 10H20" stroke="#fff" stroke-width="9.600"/><path d="M-3 -4 L8.500 10 L-3 24" fill="none" stroke="#007749" stroke-width="6.800"/><path d="M8.500 10H20" stroke="#007749" stroke-width="7"/><path d="M0 1.800 L7.100 10 L0 18.200Z" fill="#ffb81c"/><path d="M0 3.600 L5.700 10 L0 16.400Z" fill="#000"/></g></svg>
<svg style="left:104px;top:754px" width="20" height="20" viewBox="0 0 20 20"><defs><clipPath id="fjp"><circle cx="10" cy="10" r="10"/></clipPath></defs><g clip-path="url(#fjp)"><rect width="20" height="20" fill="#fff"/><ellipse cx="10" cy="10" rx="4.100" ry="8.050" fill="#bc002d"/></g></svg>
<svg style="left:104px;top:792px" width="20" height="20" viewBox="0 0 20 20"><defs><clipPath id="fin"><circle cx="10" cy="10" r="10"/></clipPath></defs><g clip-path="url(#fin)"><rect width="20" height="20" fill="#fff"/><rect width="20" height="6.200" fill="#ff9933"/><rect y="14" width="20" height="6" fill="#138808"/><ellipse cx="10" cy="10.100" rx="2.100" ry="3.900" fill="#5a5ab8"/><ellipse cx="10" cy="10.100" rx="1.200" ry="2.800" fill="#1a1a90"/></g></svg>
<svg style="left:0;top:0" width="1780" height="1193" viewBox="0 0 1780 1193"><path fill="#0a7abf" d="M1692.7 1154.2 C1680 1160 1672 1169 1667.6 1179.8 L1684.5 1179.8 C1680.5 1173 1682 1165 1692.7 1154.2Z M1660.4 1163.7 C1661.2 1170 1662.6 1175 1664.3 1179.8 L1658.1 1179.8 C1658.2 1173 1659 1168 1660.4 1163.7Z"/></svg>

<!-- text -->
<span class="t" style="left:815.62px;top:13.00px;font-size:12px;-webkit-text-stroke:0.42px #0f5ba7;color:#0f5ba7;letter-spacing:0.091px;">Demo Enterprises Inc / Production</span>
<span class="t" style="left:94.58px;top:47.00px;font-size:11.5px;color:#666;letter-spacing:0.193px;">SecureEdge</span>
<span class="t" style="left:94.56px;top:61.00px;font-size:31px;color:#111;letter-spacing:-0.689px;">Dashboard</span>
<span class="t" style="left:144.01px;top:121.00px;font-size:13px;-webkit-text-stroke:0.42px #222;color:#222;letter-spacing:0.120px;">Status</span>
<span class="t" style="left:298.71px;top:121.00px;font-size:13px;-webkit-text-stroke:0.42px #222;color:#222;letter-spacing:0.064px;">Security</span>
<span class="t" style="left:447.53px;top:121.00px;font-size:13px;-webkit-text-stroke:0.42px #0f5ba7;color:#0f5ba7;letter-spacing:-0.213px;">DNS Access</span>
<span class="t" style="left:596.80px;top:121.00px;font-size:13px;-webkit-text-stroke:0.42px #222;color:#222;letter-spacing:0.198px;">Internet Access</span>
<span class="t" style="left:758.93px;top:121.00px;font-size:13px;-webkit-text-stroke:0.42px #222;color:#222;letter-spacing:0.175px;">Private Access</span>
<span class="t" style="left:1593.75px;top:61.00px;font-size:14px;-webkit-text-stroke:0.42px #0f5ba7;color:#0f5ba7;letter-spacing:0.213px;">Barracuda Assistant</span>
<span class="t" style="left:1522.54px;top:121.00px;font-size:14px;-webkit-text-stroke:0.42px #0f5ba7;color:#0f5ba7;letter-spacing:0.153px;">Options</span>
<span class="t" style="left:1637.67px;top:121.00px;font-size:14px;-webkit-text-stroke:0.42px #ffffff;color:#ffffff;letter-spacing:-0.014px;">Add Dashboard</span>
<span class="t" style="left:1646.15px;top:182.00px;font-size:14px;-webkit-text-stroke:0.42px #0f4f8f;color:#0f4f8f;letter-spacing:-0.013px;">Edit Dashboard</span>
<span class="t" style="left:132.47px;top:182.00px;font-size:14px;-webkit-text-stroke:0.42px #0f5ba7;color:#0f5ba7;letter-spacing:0.104px;">Add Filter</span>
<span class="t" style="left:218.64px;top:182.00px;font-size:14px;color:#333;letter-spacing:0.030px;">Widgets marked with</span>
<span class="t" style="left:375.53px;top:182.00px;font-size:14px;color:#333;letter-spacing:0.023px;">have all the active filters applied.</span>
<span class="t" style="left:101.56px;top:235.00px;font-size:10.5px;color:#606060;letter-spacing:0.126px;">Timeframe</span>
<span class="t" style="left:94.45px;top:250.00px;font-size:14px;color:#262626;letter-spacing:0.060px;">Last 30 days</span>
<span class="t" style="left:364.64px;top:235.00px;font-size:10.5px;color:#606060;letter-spacing:0.029px;">Edge Service/Site/PoP</span>
<span class="t" style="left:359.37px;top:250.00px;font-size:14px;color:#262626;letter-spacing:-0.071px;">AnnArbor</span>
<span class="t" style="left:15.74px;top:92.00px;font-size:8px;-webkit-text-stroke:0.25px #0f5ba7;color:#0f5ba7;letter-spacing:0.016px;">Dashboard</span>
<span class="t" style="left:10.26px;top:140.00px;font-size:8px;-webkit-text-stroke:0.25px #444;color:#444;letter-spacing:0.227px;">Infrastructure</span>
<span class="t" style="left:22.58px;top:188.00px;font-size:8px;-webkit-text-stroke:0.25px #444;color:#444;letter-spacing:0.122px;">Access</span>
<span class="t" style="left:20.44px;top:236.00px;font-size:8px;-webkit-text-stroke:0.25px #444;color:#444;letter-spacing:0.096px;">Security</span>
<span class="t" style="left:21.36px;top:284.00px;font-size:8px;-webkit-text-stroke:0.25px #444;color:#444;letter-spacing:0.237px;">Identity</span>
<span class="t" style="left:20.84px;top:332.00px;font-size:8px;-webkit-text-stroke:0.25px #444;color:#444;letter-spacing:0.155px;">Reports</span>
<span class="t" style="left:15.26px;top:380.00px;font-size:8px;-webkit-text-stroke:0.25px #444;color:#444;letter-spacing:0.245px;">Integration</span>
<span class="t" style="left:16.82px;top:1125.00px;font-size:8px;-webkit-text-stroke:0.25px #444;color:#444;letter-spacing:0.160px;">Your Apps</span>
<span class="t" style="left:29.37px;top:1156.00px;font-size:16px;color:#2a2a2a;">G</span>
<span class="t" style="left:99.33px;top:320.00px;font-size:16px;font-weight:700;color:#161616;letter-spacing:-0.358px;">Device Map</span>
<span class="t" style="left:262.02px;top:537.00px;font-size:12px;color:#333;letter-spacing:0.038px;">Devices</span>
<span class="t" style="left:497.12px;top:320.00px;font-size:16px;font-weight:700;color:#161616;letter-spacing:-0.600px;">Top Allowed Web URL Categories</span>
<span class="t" style="left:738.93px;top:321.00px;font-size:13.5px;font-weight:700;color:#161616;letter-spacing:0.057px;">(per Traffic)</span>
<span class="t" style="left:523.35px;top:366.00px;font-size:14px;color:#2b2b2b;letter-spacing:0.513px;">News</span>
<span class="t" style="left:523.79px;top:404.00px;font-size:14px;color:#2b2b2b;letter-spacing:0.159px;">Computing &amp; Internet</span>
<span class="t" style="left:523.35px;top:442.00px;font-size:14px;color:#2b2b2b;letter-spacing:0.178px;">Entertainment, Venues, or Activities</span>
<span class="t" style="left:523.35px;top:480.00px;font-size:14px;color:#2b2b2b;letter-spacing:0.247px;">Education</span>
<span class="t" style="left:523.35px;top:518.00px;font-size:14px;color:#2b2b2b;letter-spacing:0.234px;">Financial Products</span>
<span class="t" style="left:900.94px;top:366.00px;font-size:14px;color:#b0b0b0;letter-spacing:-0.217px;">54 MB</span>
<span class="t" style="left:900.97px;top:404.00px;font-size:14px;color:#b0b0b0;letter-spacing:-0.224px;">32 MB</span>
<span class="t" style="left:901.23px;top:442.00px;font-size:14px;color:#b0b0b0;letter-spacing:-0.291px;">19 MB</span>
<span class="t" style="left:901.23px;top:480.00px;font-size:14px;color:#b0b0b0;letter-spacing:-0.291px;">17 MB</span>
<span class="t" style="left:901.23px;top:518.00px;font-size:14px;color:#b0b0b0;letter-spacing:-0.291px;">13 MB</span>
<span class="t" style="left:1288.22px;top:320.00px;font-size:16px;font-weight:700;color:#161616;letter-spacing:-0.615px;">Top Blocked Web Domains</span>
<span class="t" style="left:1315.59px;top:366.00px;font-size:14px;color:#2b2b2b;letter-spacing:0.271px;">Consolidated</span>
<span class="t" style="left:1316.10px;top:404.00px;font-size:14px;color:#2b2b2b;letter-spacing:0.264px;">freecodecamp.org</span>
<span class="t" style="left:1316.25px;top:442.00px;font-size:14px;color:#2b2b2b;letter-spacing:0.297px;">vsetop.com</span>
<span class="t" style="left:1315.91px;top:480.00px;font-size:14px;color:#2b2b2b;letter-spacing:0.322px;">showroomprive.com</span>
<span class="t" style="left:1315.33px;top:518.00px;font-size:14px;color:#2b2b2b;letter-spacing:0.365px;">highsnobiety.com</span>
<span class="t" style="left:1514.30px;top:366.00px;font-size:14px;color:#b0b0b0;letter-spacing:-0.417px;">2.2K</span>
<span class="t" style="left:1518.73px;top:404.00px;font-size:14px;color:#b0b0b0;letter-spacing:0.009px;">184</span>
<span class="t" style="left:1518.73px;top:442.00px;font-size:14px;color:#b0b0b0;letter-spacing:0.111px;">176</span>
<span class="t" style="left:1518.73px;top:480.00px;font-size:14px;color:#b0b0b0;letter-spacing:0.077px;">170</span>
<span class="t" style="left:1518.73px;top:518.00px;font-size:14px;color:#b0b0b0;letter-spacing:0.111px;">163</span>
<span class="t" style="left:99.44px;top:596.00px;font-size:16px;font-weight:700;color:#161616;letter-spacing:-0.569px;">User Geo Location</span>
<span class="t" style="left:133.42px;top:642.00px;font-size:14px;color:#2b2b2b;letter-spacing:0.237px;">United Kingdom</span>
<span class="t" style="left:133.42px;top:680.00px;font-size:14px;color:#2b2b2b;letter-spacing:0.213px;">United States of America</span>
<span class="t" style="left:133.86px;top:718.00px;font-size:14px;color:#2b2b2b;letter-spacing:0.258px;">South Africa</span>
<span class="t" style="left:134.28px;top:756.00px;font-size:14px;color:#2b2b2b;letter-spacing:0.368px;">Japan</span>
<span class="t" style="left:133.21px;top:794.00px;font-size:14px;color:#2b2b2b;letter-spacing:0.233px;">India</span>
<span class="t" style="left:346.05px;top:642.00px;font-size:14px;color:#b0b0b0;">2</span>
<span class="t" style="left:346.40px;top:680.00px;font-size:14px;color:#b0b0b0;">1</span>
<span class="t" style="left:346.40px;top:718.00px;font-size:14px;color:#b0b0b0;">1</span>
<span class="t" style="left:346.40px;top:756.00px;font-size:14px;color:#b0b0b0;">1</span>
<span class="t" style="left:346.40px;top:794.00px;font-size:14px;color:#b0b0b0;">1</span>
<span class="t" style="left:497.12px;top:596.00px;font-size:16px;font-weight:700;color:#161616;letter-spacing:-0.624px;">Top Blocked Web URL Categories</span>
<span class="t" style="left:524.47px;top:642.00px;font-size:14px;color:#2b2b2b;letter-spacing:0.162px;">Adult Porn</span>
<span class="t" style="left:523.86px;top:680.00px;font-size:14px;color:#2b2b2b;letter-spacing:0.081px;">Shopping or Retail</span>
<span class="t" style="left:523.35px;top:718.00px;font-size:14px;color:#2b2b2b;letter-spacing:-0.016px;">Fashion &amp; Beauty</span>
<span class="t" style="left:523.80px;top:756.00px;font-size:14px;color:#2b2b2b;">Gambling In General</span>
<span class="t" style="left:523.35px;top:794.00px;font-size:14px;color:#2b2b2b;letter-spacing:0.215px;">Employment</span>
<span class="t" style="left:854.47px;top:642.00px;font-size:14px;color:#b0b0b0;letter-spacing:-0.305px;">3.1K Sessions</span>
<span class="t" style="left:854.93px;top:680.00px;font-size:14px;color:#b0b0b0;letter-spacing:-0.344px;">1.5K Sessions</span>
<span class="t" style="left:858.64px;top:718.00px;font-size:14px;color:#b0b0b0;letter-spacing:-0.218px;">996 Sessions</span>
<span class="t" style="left:858.69px;top:756.00px;font-size:14px;color:#b0b0b0;letter-spacing:-0.223px;">852 Sessions</span>
<span class="t" style="left:858.98px;top:794.00px;font-size:14px;color:#b0b0b0;letter-spacing:-0.249px;">452 Sessions</span>
<span class="t" style="left:1288.22px;top:596.00px;font-size:16px;font-weight:700;color:#161616;letter-spacing:-0.612px;">Top Web Users</span>
<span class="t" style="left:1315.71px;top:642.00px;font-size:14px;color:#2b2b2b;letter-spacing:0.197px;">ovaler@mydomain.com</span>
<span class="t" style="left:1315.22px;top:680.00px;font-size:14px;color:#2b2b2b;letter-spacing:0.292px;">Unauthenticated Traffic</span>
<span class="t" style="left:1315.40px;top:718.00px;font-size:14px;color:#2b2b2b;letter-spacing:0.294px;">bmars@mydomain.com</span>
<span class="t" style="left:1315.36px;top:756.00px;font-size:14px;color:#2b2b2b;letter-spacing:0.261px;">logan@mydomain2.com</span>
<span class="t" style="left:1504.73px;top:642.00px;font-size:14px;color:#b0b0b0;letter-spacing:-0.550px;">15 GB</span>
<span class="t" style="left:1497.94px;top:680.00px;font-size:14px;color:#b0b0b0;letter-spacing:-0.290px;">567 MB</span>
<span class="t" style="left:1502.84px;top:718.00px;font-size:14px;color:#b0b0b0;letter-spacing:-0.267px;">51 MB</span>
<span class="t" style="left:1500.04px;top:756.00px;font-size:14px;color:#b0b0b0;letter-spacing:-0.432px;">5.6 MB</span>
<span class="t" style="left:100.22px;top:872.00px;font-size:16px;font-weight:700;color:#161616;letter-spacing:-0.556px;">Top Allowed Web Domains</span>
<span class="t" style="left:294.93px;top:873.00px;font-size:13.5px;font-weight:700;color:#161616;letter-spacing:0.040px;">(per Traffic)</span>
<span class="t" style="left:127.69px;top:918.00px;font-size:14px;color:#2b2b2b;letter-spacing:0.271px;">Consolidated</span>
<span class="t" style="left:128.01px;top:956.00px;font-size:14px;color:#2b2b2b;letter-spacing:0.341px;">stoiximan.gr</span>
<span class="t" style="left:127.49px;top:994.00px;font-size:14px;color:#2b2b2b;letter-spacing:0.359px;">ucsb.edu</span>
<span class="t" style="left:127.47px;top:1032.00px;font-size:14px;color:#2b2b2b;letter-spacing:0.174px;">nzherald.co.nz</span>
<span class="t" style="left:127.47px;top:1070.00px;font-size:14px;color:#2b2b2b;letter-spacing:0.480px;">mintmanga.com</span>
<span class="t" style="left:497.00px;top:918.00px;font-size:14px;color:#b0b0b0;letter-spacing:-0.202px;">217 MB</span>
<span class="t" style="left:504.49px;top:956.00px;font-size:14px;color:#b0b0b0;letter-spacing:-0.180px;">69 MB</span>
<span class="t" style="left:511.89px;top:994.00px;font-size:14px;color:#b0b0b0;letter-spacing:-0.114px;">8 MB</span>
<span class="t" style="left:512.28px;top:1032.00px;font-size:14px;color:#b0b0b0;letter-spacing:-0.244px;">7 MB</span>
<span class="t" style="left:501.88px;top:1070.00px;font-size:14px;color:#b0b0b0;letter-spacing:-0.400px;">4.8 MB</span>
<span class="t" style="left:891.80px;top:872.00px;font-size:16px;font-weight:700;color:#161616;letter-spacing:-0.601px;">Agent OS in Use</span>
<span class="t" style="left:1011.28px;top:923.00px;font-size:32px;color:#404040;letter-spacing:-0.534px;">Total</span>
<span class="t" style="left:1084.38px;top:923.00px;font-size:32px;font-weight:700;color:#5f7896;letter-spacing:-1.306px;">14</span>
<span class="t" style="left:923.14px;top:998.00px;font-size:14px;color:#333;letter-spacing:0.028px;">Windows</span>
<span class="t" style="left:1046.47px;top:998.00px;font-size:14px;color:#333;letter-spacing:-0.254px;">macOS</span>
<span class="t" style="left:1158.87px;top:998.00px;font-size:14px;color:#333;letter-spacing:0.094px;">Android</span>
<span class="t" style="left:944.97px;top:1035.00px;font-size:24px;font-weight:700;color:#2f8acb;">6</span>
<span class="t" style="left:1062.47px;top:1035.00px;font-size:24px;font-weight:700;color:#c9be33;">4</span>
<span class="t" style="left:1176.27px;top:1035.00px;font-size:24px;font-weight:700;color:#8e4fa6;">2</span>
<span class="t" style="left:85.82px;top:1164.00px;font-size:12px;color:#1a73c4;letter-spacing:-0.045px;text-decoration:underline;">Privacy Policy</span>
<span class="t" style="left:162.24px;top:1164.00px;font-size:12px;color:#444;">|</span>
<span class="t" style="left:168.99px;top:1164.00px;font-size:12px;color:#1a73c4;letter-spacing:-0.029px;text-decoration:underline;">Cookie Settings</span>
<span class="t" style="left:257.63px;top:1164.00px;font-size:12px;color:#444;letter-spacing:-0.047px;">| © 2026 Barracuda Networks, Inc. All rights reserved. | BCC Account ID: 12345678</span>
<span class="t" style="left:1690.41px;top:1166.00px;font-size:17px;color:#444;letter-spacing:-0.718px;">Barracuda</span>
</div></div>
</body>
</html>
